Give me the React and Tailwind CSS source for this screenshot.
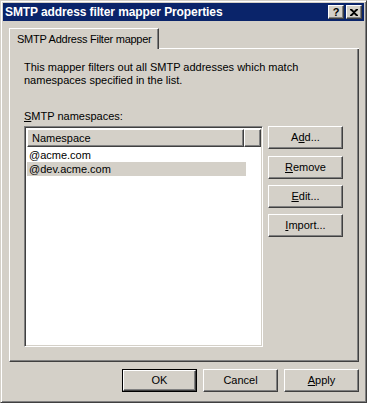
export default function App() {
  const font = { fontFamily: '"Liberation Sans", Arial, sans-serif' };
  const raised =
    "border border-t-white border-l-white border-r-[#404040] border-b-[#404040] shadow-[inset_-1px_-1px_0_#808080]";
  const Btn = ({ children, cls = "" }) => (
    <div
      className={`w-[75px] h-[23px] bg-[#d4d0c8] flex items-center justify-center text-[11px] text-black ${raised} ${cls}`}
    >
      {children}
    </div>
  );
  return (
    <div
      style={font}
      className="w-[367px] h-[403px] bg-[#d4d0c8] border border-t-[#d4d0c8] border-l-[#d4d0c8] border-r-[#404040] border-b-[#404040] shadow-[inset_1px_1px_0_#fff,inset_-1px_-1px_0_#808080] p-[2px] flex flex-col text-[11px] text-black leading-[13px] select-none"
    >
      {/* Title bar */}
      <div className="h-[18px] bg-[#0a246a] flex items-center pl-[2px] pr-[2px]">
        <div className="flex-1 text-white font-bold text-[12px] leading-[18px] whitespace-nowrap tracking-[-0.1px]">
          SMTP address filter mapper Properties
        </div>
        <div className="flex gap-[2px]">
          <div className={`w-[16px] h-[14px] bg-[#d4d0c8] flex items-center justify-center ${raised}`}>
            <span className="font-bold text-[11px] leading-[11px] text-black">?</span>
          </div>
          <div className={`w-[16px] h-[14px] bg-[#d4d0c8] flex items-center justify-center ${raised}`}>
            <svg width="8" height="7" viewBox="0 0 8 7">
              <path d="M0 0h2l2 2 2-2h2v1L5 3.5 8 6v1H6L4 5 2 7H0V6l3-2.5L0 1z" fill="#000" />
            </svg>
          </div>
        </div>
      </div>

      {/* Tab strip */}
      <div className="mt-[7px] ml-[6px] mr-[5px] h-[21px] flex">
        <div className="w-[150px] h-[21px] border-t border-l border-r border-t-white border-l-white border-r-[#404040] shadow-[inset_-1px_0_0_#808080] pl-[7px] pt-[4px] whitespace-nowrap tracking-[-0.25px]">
          SMTP Address Filter mapper
        </div>
        <div className="flex-1 border-b border-b-white" />
      </div>

      {/* Tab page */}
      <div className="ml-[6px] mr-[5px] h-[313px] border-l border-r border-b border-l-white border-r-[#404040] border-b-[#404040] shadow-[inset_-1px_-1px_0_#808080] pl-[14px] pt-[12px] flex flex-col">
        <div>This mapper filters out all SMTP addresses which match</div>
        <div>namespaces specified in the list.</div>
        <div className="mt-[23px]">
          <span className="underline">S</span>MTP namespaces:
        </div>
        <div className="mt-[3px] flex">
          {/* List box */}
          <div className="w-[239px] h-[221px] bg-white border border-t-[#808080] border-l-[#808080] border-r-white border-b-white shadow-[inset_1px_1px_0_#404040,inset_-1px_-1px_0_#d4d0c8] p-[1px]">
            <div className="flex h-[18px] ml-[1px] mt-[1px]">
              <div className="w-[218px] h-[18px] bg-[#d4d0c8] border border-t-white border-l-white border-r-[#404040] border-b-[#404040] shadow-[inset_-1px_-1px_0_#808080] pl-[4px] leading-[16px]">
                Namespace
              </div>
              <div className="w-[17px] h-[18px] bg-[#d4d0c8] border border-t-white border-l-white border-r-[#404040] border-b-[#404040] shadow-[inset_-1px_-1px_0_#808080]" />
            </div>
            <div className="ml-[1px] mt-[1px]">
              <div className="w-[219px] h-[14px] pl-[2px] leading-[14px]">@acme.com</div>
              <div className="w-[219px] h-[14px] pl-[2px] leading-[14px] bg-[#d4d0c8]">@dev.acme.com</div>
            </div>
          </div>
          {/* Buttons */}
          <div className="ml-[5px] flex flex-col">
            <Btn>
              A<span className="underline">d</span>d...
            </Btn>
            <Btn cls="mt-[7px]">
              <span className="underline">R</span>emove
            </Btn>
            <Btn cls="mt-[6px]">
              <span className="underline">E</span>dit...
            </Btn>
            <Btn cls="mt-[6px]">
              <span className="underline">I</span>mport...
            </Btn>
          </div>
        </div>
      </div>

      {/* Bottom buttons */}
      <div className="mt-[7px] pr-[5px] flex justify-end gap-[6px]">
        <div className="w-[75px] h-[23px] border border-black">
          <div className={`w-full h-full bg-[#d4d0c8] flex items-center justify-center ${raised}`}>OK</div>
        </div>
        <Btn>Cancel</Btn>
        <Btn>
          <span className="underline">A</span>pply
        </Btn>
      </div>
    </div>
  );
}
